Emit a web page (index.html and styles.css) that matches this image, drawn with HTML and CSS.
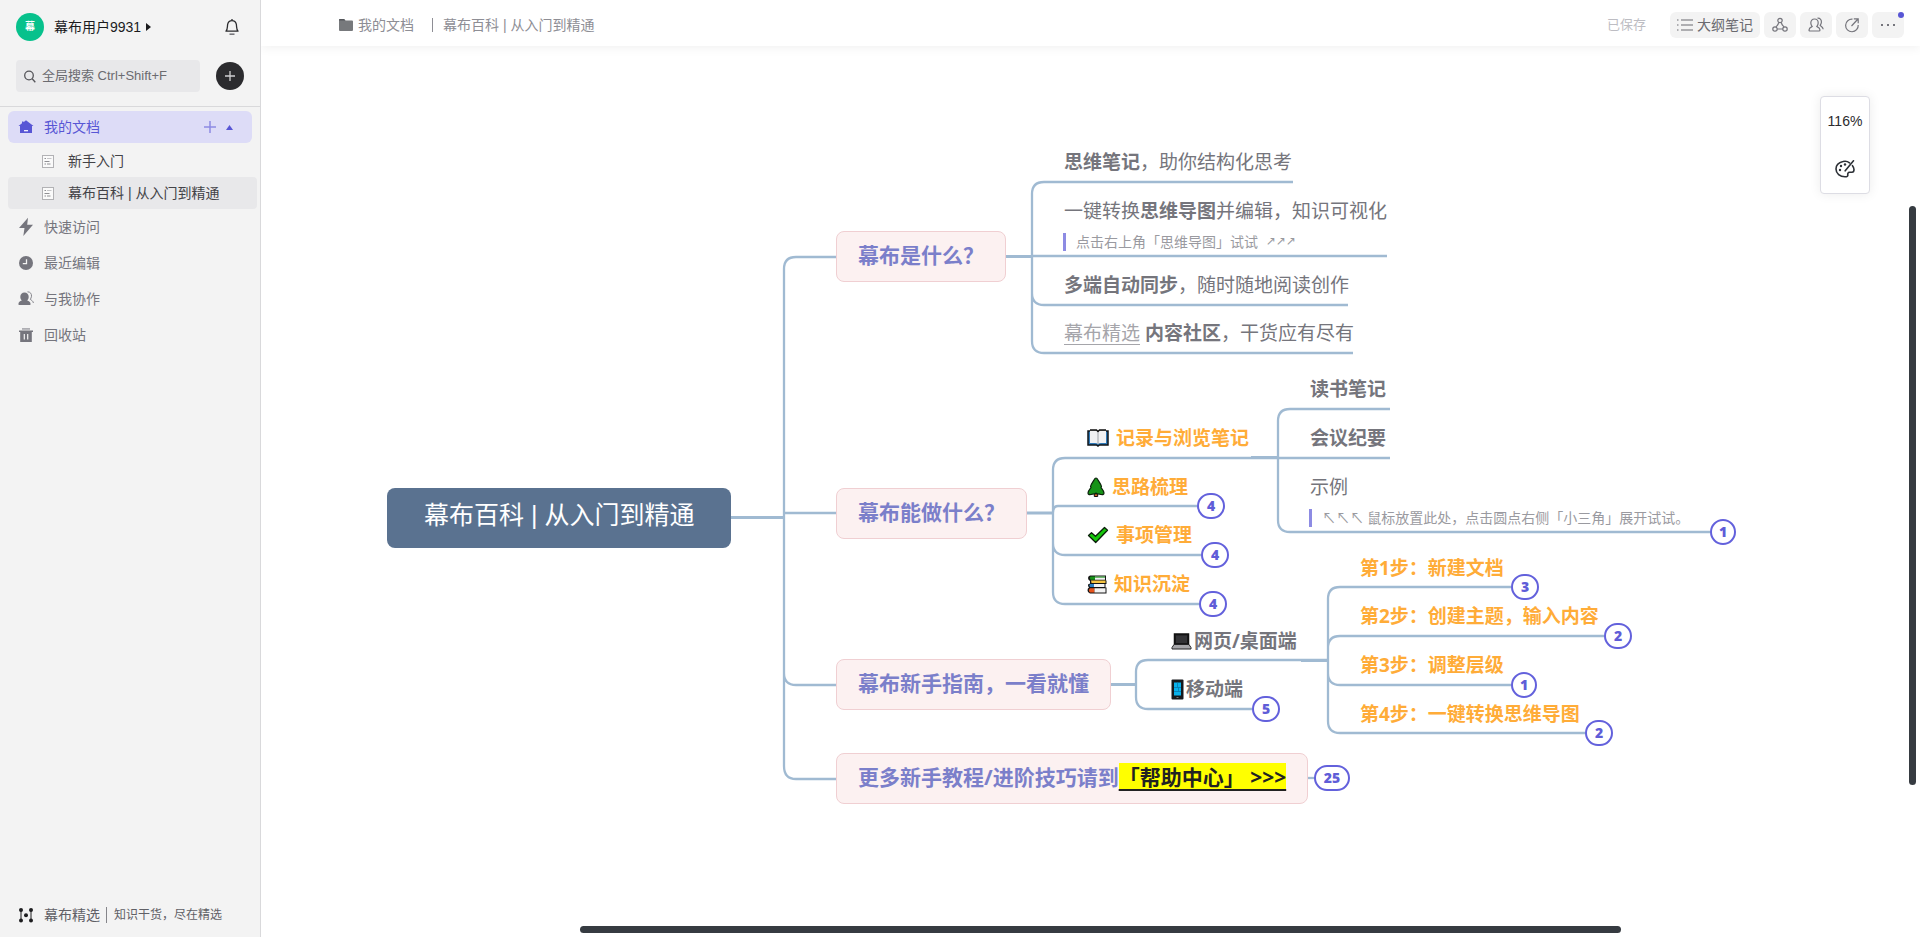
FILE: index.html
```html
<!DOCTYPE html>
<html lang="zh-CN">
<head>
<meta charset="utf-8">
<title>幕布百科 | 从入门到精通</title>
<link rel="stylesheet" href="styles.css">
</head>
<body>
<div class="app">
  <aside class="sidebar">
    <div class="profile">
      <span class="avatar">幕</span>
      <button class="user" type="button">幕布用户9931
        <svg width="5" height="8" viewBox="0 0 5 8"><path d="M0 0L5 4L0 8Z" fill="currentColor"/></svg>
      </button>
      <button class="bell" type="button" aria-label="通知">
        <svg width="16" height="18" viewBox="0 0 16 18" fill="none" stroke="#2b2b2e" stroke-width="1.3"><path d="M8 1V2.500M2 13.200C3.800 11.200 3.200 8.500 3.700 6.200C4.200 4 5.800 2.600 8 2.600S11.800 4 12.300 6.200C12.800 8.500 12.200 11.200 14 13.200Z" stroke-linejoin="round"/><path d="M5.500 16.200H10.500" stroke="#77777c" stroke-width="1.6"/></svg>
      </button>
    </div>
    <div class="search-row">
      <label class="search">
        <svg width="12" height="13" viewBox="0 0 12 13" fill="none" stroke="#55555a" stroke-width="1.3"><circle cx="5" cy="5.500" r="4.300"/><path d="M8.200 8.800L11.300 12.200"/></svg>
        <input type="search" aria-label="全局搜索" placeholder="全局搜索 Ctrl+Shift+F">
      </label>
      <button class="create" type="button" aria-label="新建">
        <svg width="10" height="10" viewBox="0 0 10 10" stroke="#d0d0d2" stroke-width="1.3"><path d="M5 0V10M0 5H10"/></svg>
      </button>
    </div>
    <nav class="nav">
      <a class="item active" href="#docs">
        <svg class="item-icon" width="16" height="16" viewBox="0 0 16 16"><path d="M8 1.300L15.500 7H14V14H2V7H.5L4 4.300V2.500H5.500V3.200Z" fill="#5856d5"/><path d="M6 11.700H10" stroke="#fff" stroke-width="1.200"/></svg>
        <span class="grow">我的文档</span>
        <svg width="12" height="12" viewBox="0 0 12 12" stroke="#8d8be3" stroke-width="1.500"><path d="M6 0V12M0 6H12"/></svg>
        <svg width="7" height="5" viewBox="0 0 7 5"><path d="M3.500 0L7 5H0Z" fill="#5856d5"/></svg>
      </a>
      <a class="item child" href="#start">
        <svg width="14" height="14" viewBox="0 0 14 14" fill="none"><rect x="1.500" y="1.500" width="11" height="12" fill="#fafafa" stroke="#b2b2b5"/><path d="M3.500 4.500H5M3.500 7.500H8.500M3.500 10H5M6 10H9.500" stroke="#909094"/><path d="M6 4.500H10.500" stroke="#c5c5c8"/></svg>
        新手入门
      </a>
      <a class="item child current" href="#wiki">
        <svg width="14" height="14" viewBox="0 0 14 14" fill="none"><rect x="1.500" y="1.500" width="11" height="12" fill="#fafafa" stroke="#b2b2b5"/><path d="M3.500 4.500H5M3.500 7.500H8.500M3.500 10H5M6 10H9.500" stroke="#909094"/><path d="M6 4.500H10.500" stroke="#c5c5c8"/></svg>
        幕布百科 | 从入门到精通
      </a>
      <a class="item" href="#quick">
        <svg class="item-icon" width="16" height="20" viewBox="0 0 16 20"><path d="M10 .8L1 11H6.500L5.300 19L15 7.800H9.200Z" fill="#75757d"/></svg>
        快速访问
      </a>
      <a class="item" href="#recent">
        <svg class="item-icon" width="16" height="16" viewBox="0 0 16 16"><circle cx="8" cy="8" r="7" fill="#75757d"/><path d="M8.500 4.200V8.700H4.800" stroke="#f3f3f3" stroke-width="1.300" fill="none"/></svg>
        最近编辑
      </a>
      <a class="item" href="#shared">
        <svg class="item-icon" width="16" height="16" viewBox="0 0 16 16"><path d="M6.500 1.500C9 1.500 10.700 3.300 10.700 5.800C10.700 7.400 10 8.600 9.200 9.600C11 10.400 12.600 11.200 12.600 13.200Q12.600 14 11.800 14H1.200Q.4 14 .4 13.200C.4 11.200 2 10.400 3.800 9.600C3 8.600 2.300 7.400 2.300 5.800C2.300 3.300 4 1.500 6.500 1.500Z" fill="#75757d"/><path d="M9.500 .8C12.500 .8 13.700 3 13.500 5.200C13.400 6.700 12.600 7.600 12.300 8.400C13.600 9.400 15.200 10 15.400 12" fill="none" stroke="#85858c"/></svg>
        与我协作
      </a>
      <a class="item" href="#trash">
        <svg class="item-icon" width="16" height="16" viewBox="0 0 16 16"><path d="M4 1H12V2.800H4Z" fill="#aeaeb3"/><path d="M1 3.500H15V5H13.800V15H2.200V5H1Z" fill="#75757d"/><path d="M6.300 7V12.500M9.700 7V12.500" stroke="#f3f3f3" stroke-width="1.200"/></svg>
        回收站
      </a>
    </nav>
    <a class="promo" href="#featured">
      <svg class="item-icon" width="16" height="16" viewBox="0 0 16 16" fill="#1e1e20" stroke="#1e1e20"><path d="M3 3V14M13 3V14"/><g stroke="none"><circle cx="3" cy="3" r="2"/><circle cx="3" cy="13.500" r="2"/><circle cx="13" cy="3" r="2"/><circle cx="13" cy="13.500" r="2"/><circle cx="8" cy="8.300" r="2"/></g></svg>
      <span>幕布精选</span><i class="promo-line"></i><small>知识干货，尽在精选</small>
    </a>
  </aside>

  <main class="main">
    <header class="topbar">
      <svg width="14" height="13" viewBox="0 0 14 13"><path d="M0 1Q0 0 1 0H5L6.500 1.500H13Q14 1.500 14 2.500V11Q14 12 13 12H1Q0 12 0 11Z" fill="#77797c"/><path d="M0 1Q0 0 1 0H5L6.500 1.500H0Z" fill="#54565a"/></svg>
      <a class="crumb" href="#docs">我的文档</a>
      <i class="crumb-line"></i>
      <a class="crumb title" href="#wiki">幕布百科 | 从入门到精通</a>
      <span class="saved">已保存</span>
      <div class="tools">
        <button class="tool outline" type="button">
          <svg width="16" height="14" viewBox="0 0 16 14" fill="none" stroke="#98989c" stroke-width="1.300"><path d="M0 2H1.500M4 2H16M0 7H1.500M4 7H16M0 12H1.500M4 12H16"/></svg>
          大纲笔记
        </button>
        <button class="tool" type="button" aria-label="思维导图">
          <svg width="16" height="16" viewBox="0 0 16 16" fill="none" stroke="#75757c" stroke-width="1.200"><circle cx="8" cy="3.500" r="2.200"/><circle cx="3" cy="12" r="2.200"/><circle cx="13" cy="12" r="2.200"/><path d="M6.700 5.300C6.200 8 5 8.500 4 10M9.300 5.300C9.800 8 11 8.500 12 10M5.200 12H10.800"/></svg>
        </button>
        <button class="tool" type="button" aria-label="协作">
          <svg width="16" height="16" viewBox="0 0 16 16" fill="none" stroke="#75757c" stroke-width="1.200"><path d="M6.500 2C8.800 2 10.200 3.700 10.200 5.900C10.200 7.500 9.500 8.600 8.800 9.500C10.600 10.400 12 11 12 13Q12 14 11 14H2Q1 14 1 13C1 11 2.400 10.400 4.200 9.500C3.500 8.600 2.800 7.500 2.800 5.900C2.800 3.700 4.200 2 6.500 2Z"/><path d="M9.500 1.200C12.300 1 13.600 3 13.400 5.200C13.300 6.700 12.500 7.600 12.200 8.400C13.500 9.400 15 10 15.200 12.300"/></svg>
        </button>
        <button class="tool" type="button" aria-label="分享">
          <svg width="16" height="16" viewBox="0 0 16 16" fill="none" stroke="#75757c" stroke-width="1.200"><path d="M8.500 2.200A6.300 6.300 0 1 0 14.200 8M7.500 9L14 2M9.800 1.800H14.200V6.200"/></svg>
        </button>
        <button class="tool more" type="button" aria-label="更多">
          <svg width="16" height="4" viewBox="0 0 16 4" fill="#75757c"><path d="M1 1H3V3H1ZM7 1H9V3H7ZM13 1H15V3H13Z"/></svg>
          <i class="dot"></i>
        </button>
      </div>
    </header>

    <section class="board">
      <svg class="links" aria-hidden="true"><g transform="translate(-261 -46)" fill="none" stroke="#a0bad2" stroke-width="2.300">
        <path d="M836 257H796Q784 257 784 269V766Q784 779 796 779H836M784 513H836M784 673Q784 685 796 685H836"/>
        <path d="M1293 182H1044Q1032 182 1032 194V341Q1032 353 1044 353H1353M1032 256H1387M1032 293Q1032 305 1044 305H1348"/>
        <path d="M1278 458H1065Q1053 458 1053 470V592Q1053 604 1065 604H1199M1053 513Q1053 506 1058 506H1197M1053 543Q1053 555 1065 555H1201"/>
        <path d="M1390 409H1290Q1278 409 1278 421V520Q1278 532 1290 532H1710M1278 458H1390"/>
        <path d="M1328 660H1148Q1136 660 1136 672V697Q1136 709 1148 709H1252"/>
        <path d="M1511 587H1340Q1328 587 1328 599V721Q1328 733 1340 733H1586M1328 648Q1328 636 1340 636H1604M1328 673Q1328 685 1340 685H1511"/>
        <path d="M1306 778H1316"/>
        <path d="M731 517.500H784M1005 256.500H1032M1026 513H1053M1109 684.500H1136M1251 457.500H1278M1301 660.500H1328" stroke-width="3"/>
      </g></svg>

      <div class="node root at-root">幕布百科 | 从入门到精通</div>

      <div class="node topic at-what">幕布是什么？</div>
      <div class="node topic at-can">幕布能做什么？</div>
      <div class="node topic at-guide">幕布新手指南，一看就懂</div>
      <div class="node topic at-more">更多新手教程/进阶技巧请到<a class="mark" href="#help">「帮助中心」 &gt;&gt;&gt;</a></div>

      <div class="node leaf at-what-1"><span><b>思维笔记</b>，助你结构化思考</span></div>
      <div class="node leaf at-what-2"><span>一键转换<b>思维导图</b>并编辑，知识可视化</span></div>
      <div class="node note at-what-note"><span>点击右上角「思维导图」试试</span><span class="arrows">↗↗↗</span></div>
      <div class="node leaf at-what-3"><span><b>多端自动同步</b>，随时随地阅读创作</span></div>
      <div class="node leaf at-what-4"><span><a class="link" href="#featured">幕布精选</a> <b>内容社区</b>，干货应有尽有</span></div>

      <div class="node leaf key at-can-1">
        <svg width="22" height="18" viewBox="0 0 22 18"><path d="M1 2H9.500L11 3L12.500 2H21V16H12.500L11 17L9.500 16H1Z" fill="#2e78b7" stroke="#101418" stroke-width="1.500"/><path d="M3 1.500H9Q11 1.500 11 3V15Q10 14 8 14H3ZM19 1.500H13Q11 1.500 11 3V15Q12 14 14 14H19Z" fill="#f1f1f3"/><path d="M3 1H9.500L11 2.500L12.500 1H19" stroke="#111" stroke-width="1.300" fill="none"/><path d="M11 3V15" stroke="#9ca0a6"/></svg>
        <b>记录与浏览笔记</b></div>
      <div class="node leaf key at-can-2">
        <svg width="18" height="21" viewBox="0 0 18 21"><path d="M7.300 15H10.700V19.500H7.300Z" fill="#d85a20" stroke="#111"/><path d="M9 1Q10 1 11 3C12 5 14 7 14.500 9.500L14 10.500C15 12 17 14 17 16Q17 18 14 17.500Q11 16.500 10 17L9 16L8 17Q7 16.500 4 17.500Q1 18 1 16C1 14 3 12 4 10.500L3.500 9.500C4 7 6 5 7 3Q8 1 9 1Z" fill="#169317" stroke="#0b220b" stroke-width="1.200"/></svg>
        <b>思路梳理</b></div>
      <div class="node leaf key at-can-3">
        <svg width="22" height="18" viewBox="0 0 22 18"><path d="M1.500 9.500L4.500 6.800L8.500 10.300L17.500 1.500L20.500 4.300L8.700 16.500Z" fill="#16c60c" stroke="#0a1f0a" stroke-width="1.300" stroke-linejoin="round"/></svg>
        <b>事项管理</b></div>
      <div class="node leaf key at-can-4">
        <svg width="20" height="19" viewBox="0 0 20 19"><path d="M3 .5H19V5.500H19.500V9H18.500V12.500H19.500V18.500H3Q.5 18 .5 15.200Q.5 13.300 2 12.500Q.8 11.500 1 9.500L3 8.500V6Q1 5 1 3Q1 1 3 .5Z" fill="#151515"/><path d="M3.500 1.600H8V4.700H3.500Q2 3 3.500 1.600Z" fill="#169317"/><path d="M4 5.600H18.500V8H4.500Z" fill="#f5c443"/><path d="M3 9H7V12H3Q1.500 10.500 3 9Z" fill="#2b80c4"/><path d="M3 13.300H7.500V17.500H3Q.8 15.400 3 13.300Z" fill="#e8541c"/><path d="M8 1.600H18V4.700H8ZM7 9H17.500V12H7ZM7.500 13.300H18.500V17.500H7.500Z" fill="#f3f3f3"/><path d="M8 1.600H18V2.600H8Z" fill="#169317"/></svg>
        <b>知识沉淀</b></div>

      <div class="node leaf at-rec-1"><b>读书笔记</b></div>
      <div class="node leaf at-rec-2"><b>会议纪要</b></div>
      <div class="node leaf at-rec-3">示例</div>
      <div class="node note at-rec-note"><span>↖↖↖ 鼠标放置此处，点击圆点右侧「小三角」展开试试。</span></div>

      <div class="node leaf device at-dev-1">
        <svg width="21" height="17" viewBox="0 0 21 17"><path d="M3.500 1H17.500V11.500H3.500Z" fill="#1b1b1d" stroke="#111" stroke-width="1.500"/><path d="M5 2.500H16V10H5Z" fill="#343437"/><path d="M3 11.500H18L20 14.500V16H1V14.500Z" fill="#a5a5a9" stroke="#252527"/></svg>
        <b>网页/桌面端</b></div>
      <div class="node leaf device at-dev-2">
        <svg width="13" height="21" viewBox="0 0 13 21"><rect x=".5" y=".5" width="12" height="20" rx="1" fill="#17191c"/><path d="M3 3.500H10V16.500H3Z" fill="#08b2ec"/><path d="M6.500 3.500V8.500M3 8.500H10M7.500 8.500V12.500M3 12.500H10" stroke="#087bb0" stroke-width=".8"/><path d="M5.500 18.500H7.500" stroke="#777"/></svg>
        <b>移动端</b></div>

      <div class="node leaf key at-step-1"><b>第1步：新建文档</b></div>
      <div class="node leaf key at-step-2"><b>第2步：创建主题，输入内容</b></div>
      <div class="node leaf key at-step-3"><b>第3步：调整层级</b></div>
      <div class="node leaf key at-step-4"><b>第4步：一键转换思维导图</b></div>

      <button class="node count at-n-can-2" type="button">4</button>
      <button class="node count at-n-can-3" type="button">4</button>
      <button class="node count at-n-can-4" type="button">4</button>
      <button class="node count slim at-n-rec" type="button">1</button>
      <button class="node count at-n-dev" type="button">5</button>
      <button class="node count at-n-step-1" type="button">3</button>
      <button class="node count at-n-step-2" type="button">2</button>
      <button class="node count slim at-n-step-3" type="button">1</button>
      <button class="node count at-n-step-4" type="button">2</button>
      <button class="node count wide at-n-more" type="button">25</button>

      <div class="panel">
        <button type="button">116%</button>
        <button type="button" aria-label="主题样式">
          <svg width="20" height="18" viewBox="0 0 20 18" fill="none" stroke="#2c3036" stroke-width="1.600"><path d="M14.500 2.800C12.500 1.200 10 1 8 1.500C4 2.400 1 5 1 9C1 13.500 5 16.800 10 16.800C12 16.800 13 16.300 12.800 14.800C12.600 13.500 13 12.300 14.500 12.300H17C18.500 12.300 19 11 19 9.500C19 8 18.300 6.700 17.500 5.700M18.500 .8L10.200 10.800" stroke-linecap="round"/><g fill="#2c3036" stroke="none"><circle cx="6" cy="6" r="1.200"/><circle cx="10" cy="4.500" r="1.200"/><circle cx="5" cy="10" r="1.200"/></g></svg>
        </button>
      </div>
      <i class="bar bar-y"></i>
      <i class="bar bar-x"></i>
    </section>
  </main>
</div>
</body>
</html>
```

FILE: styles.css
```css
* { box-sizing: border-box; }

body {
  margin: 0;
  font: 14px/20px "Liberation Sans", "Noto Sans CJK SC", sans-serif;
  color: #2b2b2e;
  background: #fff;
}

button {
  padding: 0;
  border: 0;
  background: none;
  font: inherit;
  color: inherit;
  cursor: pointer;
}

a { color: inherit; text-decoration: none; }
svg { display: block; flex: none; }

.app { display: flex; height: 100vh; overflow: hidden; }

/* Sidebar */
.sidebar {
  position: relative;
  z-index: 2;
  display: flex;
  flex: none;
  flex-direction: column;
  width: 261px;
  border-right: 1px solid #d9d9db;
  background: #f3f3f3;
}

.profile { display: flex; align-items: center; padding: 13px 20px 0 16px; }

.avatar {
  width: 28px;
  margin-right: 10px;
  border-radius: 50%;
  background: #07c18c;
  color: #fff;
  font-size: 10px;
  font-weight: 700;
  line-height: 28px;
  text-align: center;
}

.user { display: flex; align-items: center; gap: 5px; color: #1b1b1d; }
.bell { margin-left: auto; }

.search-row {
  display: flex;
  align-items: center;
  justify-content: space-between;
  padding: 19px 16px 14px;
  border-bottom: 1px solid #d9d9db;
}

.search {
  display: flex;
  align-items: center;
  gap: 6px;
  width: 184px;
  height: 32px;
  padding: 0 8px;
  border-radius: 4px;
  background: #e8e8ea;
}

.search input {
  flex: 1;
  min-width: 0;
  padding: 0;
  border: 0;
  outline: 0;
  background: none;
  font: inherit;
  font-size: 13px;
}

.search input::placeholder { color: #6b6b70; opacity: 1; }

.create {
  display: grid;
  place-items: center;
  width: 28px;
  height: 28px;
  border-radius: 50%;
  background: #2b2b2e;
}

.nav { flex: 1; padding: 4px 8px 0; }

.item {
  display: flex;
  align-items: center;
  gap: 10px;
  height: 36px;
  padding-left: 10px;
  color: #75757d;
}

.item.active {
  height: 32px;
  margin-bottom: 2px;
  padding-right: 19px;
  border-radius: 6px;
  background: #dddcf7;
  color: #5856d5;
}

.grow { flex: 1; }

.item.child {
  gap: 13px;
  height: 32px;
  margin-right: -5px;
  padding-left: 33px;
  color: #434347;
}

.item.current { border-radius: 4px; background: #e8e8ea; }

.promo {
  display: flex;
  align-items: center;
  padding: 12px 18px;
  color: #606066;
}

.promo span { margin-left: 10px; }
.promo-line { width: 1px; height: 16px; margin: 0 7px 0 6px; background: #85858a; }
.promo small { font-size: 12px; }

/* Top bar */
.main { display: flex; flex: 1; flex-direction: column; min-width: 0; }

.topbar {
  position: relative;
  z-index: 1;
  display: flex;
  align-items: center;
  height: 46px;
  padding: 4px 16px 0 78px;
  box-shadow: 0 2px 10px rgba(0, 0, 0, 0.06);
  background: #fff;
  color: #8e8e95;
}

.crumb { margin-left: 5px; }
.crumb.title { margin-left: 10px; }
.crumb-line { width: 1px; height: 14px; margin-left: 18px; background: #8e8e95; }
.saved { margin: 0 24px 0 auto; font-size: 13px; color: #bdbdc3; }
.tools { display: flex; gap: 4px; }

.tool {
  position: relative;
  display: flex;
  align-items: center;
  justify-content: center;
  gap: 4px;
  width: 32px;
  height: 26px;
  border-radius: 6px;
  background: #f3f3f3;
  color: #6a6a70;
}

.tool.outline { width: 90px; }

.dot {
  position: absolute;
  top: 0;
  right: 0;
  width: 6px;
  height: 6px;
  border-radius: 50%;
  background: #5856d5;
}

/* Mind map */
.board {
  position: relative;
  flex: 1;
  overflow: hidden;
  font-family: "Open Sans", "Noto Sans CJK SC", sans-serif;
}

.links { position: absolute; inset: 0; width: 100%; height: 100%; }
.node { position: absolute; white-space: nowrap; }

.root {
  padding: 0 37px 6px;
  border-radius: 8px;
  background: #5a7290;
  color: #fff;
  font-family: "Liberation Sans", "Noto Sans CJK SC", sans-serif;
  font-size: 25px;
  line-height: 54px;
}

.topic {
  padding: 0 21px 3px;
  border: 1px solid #f0cfd2;
  border-radius: 8px;
  background: #fcf1f1;
  color: #7b7fca;
  font-size: 21px;
  font-weight: 700;
  line-height: 46px;
}

.mark {
  display: inline-block;
  background: #ff0;
  color: #222;
  line-height: 28px;
  text-decoration: underline;
  text-decoration-thickness: 2px;
  text-underline-offset: 4px;
}

.leaf {
  display: flex;
  align-items: center;
  gap: 7px;
  color: #75757c;
  font-size: 19px;
  line-height: 28px;
}

.key { color: #ffac38; }
.device { gap: 2px; }

.link {
  color: #a5a5aa;
  text-decoration: underline;
  text-decoration-thickness: 1px;
  text-underline-offset: 4px;
}

.note {
  display: flex;
  gap: 8px;
  padding: 0 0 2px 10px;
  border-left: 3px solid #8d8be3;
  color: #9a9aa0;
  font-family: "Noto Sans CJK SC", sans-serif;
  font-size: 14px;
  line-height: 16px;
}

.arrows { font-family: "DejaVu Sans", sans-serif; font-size: 12px; }

.count {
  min-width: 28px;
  height: 26px;
  border: 2px solid #6361dc;
  border-radius: 13px;
  background: #fff;
  color: #5f5dd8;
  font-size: 14px;
  font-weight: 800;
  line-height: 20px;
}

.count.slim { min-width: 26px; }
.count.wide { min-width: 36px; }

.at-root { left: 126px; top: 442px; }
.at-what { left: 575px; top: 185px; }
.at-can { left: 575px; top: 442px; }
.at-guide { left: 575px; top: 613px; }
.at-more { left: 575px; top: 707px; }

.at-what-1 { left: 803px; top: 102px; }
.at-what-2 { left: 803px; top: 151px; }
.at-what-note { left: 802px; top: 187px; }
.at-what-3 { left: 803px; top: 225px; }
.at-what-4 { left: 803px; top: 273px; }

.at-can-1 { left: 826px; top: 378px; }
.at-can-2 { left: 826px; top: 427px; }
.at-can-3 { left: 826px; top: 475px; }
.at-can-4 { left: 826px; top: 524px; }

.at-rec-1 { left: 1049px; top: 329px; }
.at-rec-2 { left: 1049px; top: 378px; }
.at-rec-3 { left: 1049px; top: 427px; }
.at-rec-note { left: 1048px; top: 463px; }

.at-dev-1 { left: 910px; top: 581px; }
.at-dev-2 { left: 910px; top: 629px; }

.at-step-1 { left: 1099px; top: 508px; }
.at-step-2 { left: 1099px; top: 556px; }
.at-step-3 { left: 1099px; top: 605px; }
.at-step-4 { left: 1099px; top: 654px; }

.at-n-can-2 { left: 936px; top: 447px; }
.at-n-can-3 { left: 940px; top: 496px; }
.at-n-can-4 { left: 938px; top: 545px; }
.at-n-rec { left: 1449px; top: 473px; }
.at-n-dev { left: 991px; top: 650px; }
.at-n-step-1 { left: 1250px; top: 528px; }
.at-n-step-2 { left: 1343px; top: 577px; }
.at-n-step-3 { left: 1250px; top: 626px; }
.at-n-step-4 { left: 1324px; top: 674px; }
.at-n-more { left: 1053px; top: 719px; }

/* Floating tools and scroll bars */
.panel {
  position: absolute;
  top: 50px;
  right: 50px;
  display: grid;
  grid-template-rows: 48px 48px;
  width: 50px;
  border: 1px solid #dddde4;
  border-radius: 4px;
  box-shadow: 0 0 12px rgba(0, 0, 0, 0.08);
  background: #fff;
  font-family: "Liberation Sans", sans-serif;
}

.panel button { display: grid; place-items: center; }

.bar { position: absolute; border-radius: 4px; background: #363b41; }
.bar-y { top: 160px; right: 4px; bottom: 152px; width: 7px; }
.bar-x { right: 299px; bottom: 4px; left: 319px; height: 7px; }
```
